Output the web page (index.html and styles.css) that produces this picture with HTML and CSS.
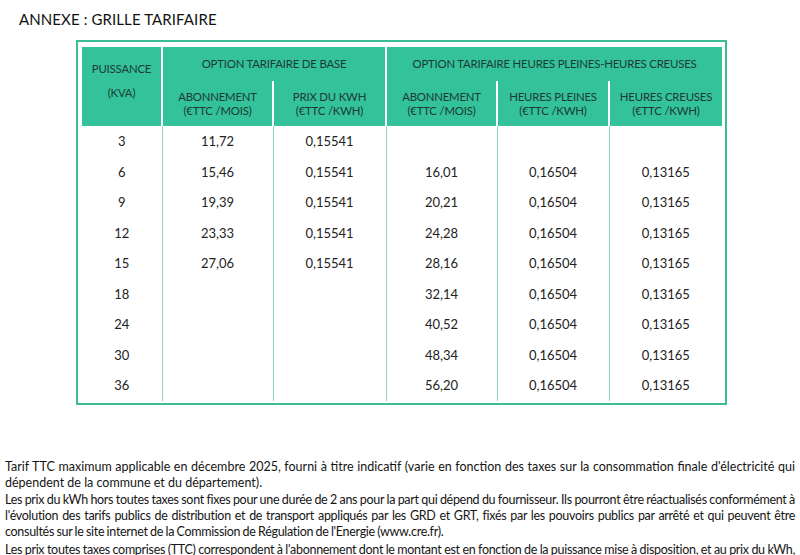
FILE: index.html
```html
<!doctype html>
<html>
  <head>
    <meta charset="utf-8">
    <title>Annexe : grille tarifaire</title>
    <link rel="stylesheet" href="styles.css">
  </head>
  <body>
    <h1>ANNEXE : GRILLE TARIFAIRE</h1>

    <div class="frame">
      <table class="tarifs">
        <colgroup>
          <col style="width: 80px">
          <col style="width: 111px">
          <col style="width: 113px">
          <col style="width: 111px">
          <col style="width: 112px">
          <col style="width: 113px">
        </colgroup>
        <thead>
          <tr class="top">
            <th rowspan="2" class="power">PUISSANCE<br>(KVA)</th>
            <th colspan="2" class="group">OPTION TARIFAIRE DE BASE</th>
            <th colspan="3" class="group">OPTION TARIFAIRE HEURES PLEINES-HEURES CREUSES</th>
          </tr>
          <tr class="sub">
            <th class="first">ABONNEMENT<br>(€TTC /MOIS)</th>
            <th>PRIX DU KWH<br>(€TTC /KWH)</th>
            <th class="first">ABONNEMENT<br>(€TTC /MOIS)</th>
            <th>HEURES PLEINES<br>(€TTC /KWH)</th>
            <th>HEURES CREUSES<br>(€TTC /KWH)</th>
          </tr>
        </thead>
        <tbody>
          <tr><td>3</td><td>11,72</td><td>0,15541</td><td></td><td></td><td></td></tr>
          <tr><td>6</td><td>15,46</td><td>0,15541</td><td>16,01</td><td>0,16504</td><td>0,13165</td></tr>
          <tr><td>9</td><td>19,39</td><td>0,15541</td><td>20,21</td><td>0,16504</td><td>0,13165</td></tr>
          <tr><td>12</td><td>23,33</td><td>0,15541</td><td>24,28</td><td>0,16504</td><td>0,13165</td></tr>
          <tr><td>15</td><td>27,06</td><td>0,15541</td><td>28,16</td><td>0,16504</td><td>0,13165</td></tr>
          <tr><td>18</td><td></td><td></td><td>32,14</td><td>0,16504</td><td>0,13165</td></tr>
          <tr><td>24</td><td></td><td></td><td>40,52</td><td>0,16504</td><td>0,13165</td></tr>
          <tr><td>30</td><td></td><td></td><td>48,34</td><td>0,16504</td><td>0,13165</td></tr>
          <tr><td>36</td><td></td><td></td><td>56,20</td><td>0,16504</td><td>0,13165</td></tr>
        </tbody>
      </table>
    </div>

    <section class="notes">
      <p>Tarif TTC maximum applicable en décembre 2025, fourni à titre indicatif (varie en fonction des taxes sur la consommation finale d'électricité qui dépendent de la commune et du département).</p>
      <p class="tight">Les prix du kWh hors toutes taxes sont fixes pour une durée de 2 ans pour la part qui dépend du fournisseur. Ils pourront être réactualisés conformément à l'évolution des tarifs publics de distribution et de transport appliqués par les GRD et GRT, fixés par les pouvoirs publics par arrêté et qui peuvent être consultés sur le site internet de la Commission de Régulation de l'Energie (www.cre.fr).</p>
      <p class="tight">Les prix toutes taxes comprises (TTC) correspondent à l'abonnement dont le montant est en fonction de la puissance mise à disposition, et au prix du kWh, qui varie selon l'option tarifaire choisie et les taxes en vigueur.</p>
    </section>
  </body>
</html>
```

FILE: styles.css
```css
html, body {
  margin: 0;
  padding: 0;
  background: #ffffff;
  font-family: Lato, "Open Sans", sans-serif;
  color: #1c1c1c;
}

h1 {
  font-size: 15px;
  font-weight: normal;
  letter-spacing: 0.1px;
  margin: 0;
  padding: 10px 0 0 19px;
  line-height: 18px;
  color: #111111;
}

.frame {
  width: 640px;
  margin: 12px 0 0 76px;
  padding: 5px 3px 2px 4px;
  border: 2px solid #3dbd96;
}

.tarifs {
  width: 640px;
  border-collapse: collapse;
  table-layout: fixed;
}

.tarifs th {
  background: #33c29a;
  color: #1d3a32;
  font-size: 11.4px;
  font-weight: normal;
  letter-spacing: -0.2px;
  text-align: center;
  padding: 0;
}

.tarifs .top th {
  height: 34px;
  line-height: 14px;
}

.tarifs .top th.power {
  vertical-align: top;
  padding-top: 10px;
  line-height: 24px;
  border-right: 2px solid #ffffff;
}

.tarifs .top th.group + th.group {
  border-left: 2px solid #ffffff;
}

.tarifs .sub th {
  height: 45px;
  line-height: 14px;
  border-left: 2px solid #ffffff;
}

.tarifs .sub th.first {
  border-left: none;
}

.tarifs .sub th:nth-child(3) {
  border-left: 2px solid #ffffff;
}

.tarifs td {
  height: 30.5px;
  padding: 0;
  text-align: center;
  font-size: 13px;
  color: #222222;
  border-left: 1px solid #8fd6bf;
}

.tarifs td:first-child {
  border-left: none;
}

.notes {
  margin: 54px 5px 0 5px;
  font-size: 12.5px;
  line-height: 16.2px;
  color: #151515;
}

.notes p {
  margin: 0;
  text-align: justify;
}

.notes p.tight {
  margin-top: 1px;
  letter-spacing: -0.3px;
  word-spacing: -0.5px;
}
```
